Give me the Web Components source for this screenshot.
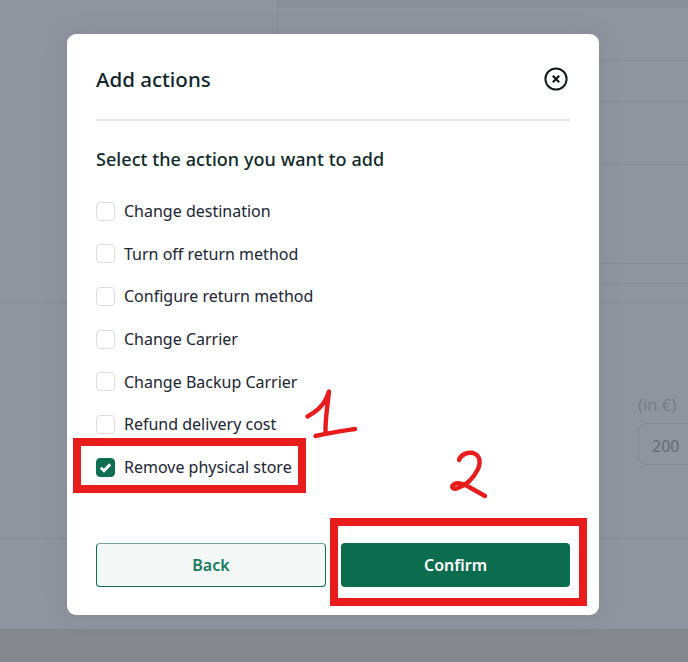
<!DOCTYPE html>
<html lang="en">
<head>
<meta charset="utf-8">
<title>Add actions</title>
<style>
  html, body { margin: 0; height: 100%; }
  body { width: 688px; height: 662px; overflow: hidden; position: relative; font-family: "Noto Sans", "Open Sans", sans-serif; }
</style>
</head>
<body>
<page-backdrop></page-backdrop>
<action-dialog heading="Add actions" prompt="Select the action you want to add">
  <action-check>Change destination</action-check>
  <action-check>Turn off return method</action-check>
  <action-check>Configure return method</action-check>
  <action-check>Change Carrier</action-check>
  <action-check>Change Backup Carrier</action-check>
  <action-check>Refund delivery cost</action-check>
  <action-check checked>Remove physical store</action-check>
  <action-button slot="footer" kind="outline">Back</action-button>
  <action-button slot="footer" kind="solid">Confirm</action-button>
</action-dialog>
<red-notes></red-notes>

<script>
// Dimmed page behind the dialog, only the row lines and the one input show through
class PageBackdrop extends HTMLElement {
  constructor() {
    super();
    this.attachShadow({ mode: "open" });
    this.shadowRoot.innerHTML = `
<style>
:host { display: flex; flex-direction: column; width: 688px; height: 662px; background: #90949f; --line: #878b96; }
.top { display: flex; height: 303px; border-bottom: 1px solid var(--line); box-sizing: border-box; }
.side { width: 277px; border-right: 1px solid var(--line); }
.rows { flex: 1; display: flex; flex-direction: column; }
.rows div { border-bottom: 1px solid var(--line); box-sizing: border-box; }
.rows .cap { height: 8px; background: #8b8f9a; border: 0; }
.middle { height: 235px; border-bottom: 1px solid var(--line); display: flex; justify-content: flex-end; }
.field { width: 50px; padding-top: 92px; display: flex; flex-direction: column; gap: 8px; font-size: 16.5px; }
.unit { color: #787d89; white-space: nowrap; line-height: 20px; }
.box { width: 64px; height: 42px; box-sizing: border-box; border: 1px solid #878b96; border-radius: 8px; color: #666b77; font-size: 16px; line-height: 44px; padding-left: 13px; }
.rest { flex: 1; }
.band { height: 33px; background: #85888f; }
</style>
<div class="top">
  <div class="side"></div>
  <div class="rows">
    <div class="cap"></div>
    <div style="height:53px"></div>
    <div style="height:41px"></div>
    <div style="height:63px"></div>
    <div style="height:99px"></div>
    <div style="height:20px"></div>
  </div>
</div>
<div class="middle">
  <div class="field">
    <div class="unit">(in €)</div>
    <div class="box">200</div>
  </div>
</div>
<div class="rest"></div>
<div class="band"></div>`;
  }
}

class ActionCheck extends HTMLElement {
  constructor() {
    super();
    this.attachShadow({ mode: "open" });
  }

  connectedCallback() {
    const checked = this.hasAttribute("checked");
    this.shadowRoot.innerHTML = `
<style>
:host { display: flex; align-items: center; gap: 9px; height: 20px; }
.box { width: 19px; height: 19px; box-sizing: border-box; border: 1px solid #dcdde3; border-radius: 4px; background: #fff; flex: none; display: flex; align-items: center; justify-content: center; }
.box.on { background: #0d6e50; border-color: #0d6e50; }
.label { font-size: 16px; line-height: 20px; color: #1b2533; white-space: nowrap; }
</style>
<span class="box ${checked ? "on" : ""}">${checked ? `<svg width="13" height="13" viewBox="0 0 13 13"><path d="M1.800 6.800 5 9.800 11.200 3.200" fill="none" stroke="#fff" stroke-width="2.800"/></svg>` : ""}</span>
<span class="label"><slot></slot></span>`;
  }
}

class ActionButton extends HTMLElement {
  constructor() {
    super();
    this.attachShadow({ mode: "open" });
  }

  connectedCallback() {
    this.shadowRoot.innerHTML = `
<style>
:host { display: flex; height: 44px; box-sizing: border-box; align-items: center; justify-content: center; border-radius: 4px; font-size: 16px; font-weight: 600; }
:host([kind="solid"]) { background: #0c6c4e; color: #fff; }
:host([kind="outline"]) { background: #f4f8f7; color: #1a7a5c; border: 1px solid #0d6e50; border-top-color: #6fa897; }
</style>
<slot></slot>`;
  }
}

class ActionDialog extends HTMLElement {
  constructor() {
    super();
    this.attachShadow({ mode: "open" });
  }

  connectedCallback() {
    this.shadowRoot.innerHTML = `
<style>
:host { position: absolute; left: 67px; top: 34px; width: 532px; height: 581px; box-sizing: border-box; padding: 0 29px; background: #fff; border-radius: 9px; box-shadow: 0 0 24px rgba(60,64,75,.12); display: flex; flex-direction: column; }
header { height: 80px; padding-top: 5px; flex: none; border-bottom: 2px solid #e8e8ee; display: flex; align-items: center; justify-content: space-between; }
h2 { margin: 0; font-size: 20.5px; font-weight: 500; color: #10242a; }
button { all: unset; display: flex; width: 24px; height: 24px; margin: -1px 2px 0 0; }
.prompt { margin: 26px 0 0; height: 24px; line-height: 24px; font-size: 18px; font-weight: 500; letter-spacing: .06px; color: #10292b; white-space: nowrap; }
.list { margin-top: 30px; display: flex; flex-direction: column; gap: 22.7px; }
footer { margin-top: auto; margin-bottom: 28px; display: grid; grid-template-columns: 230px 229px; gap: 15px; }
</style>
<header>
  <h2>${this.getAttribute("heading")}</h2>
  <button aria-label="Close">
    <svg width="24" height="24" viewBox="0 0 24 24"><circle cx="12" cy="12" r="10.6" fill="none" stroke="#15191c" stroke-width="2"/><path d="M8.8 8.8 15.2 15.2M15.2 8.8 8.8 15.2" stroke="#15191c" stroke-width="2.2"/></svg>
  </button>
</header>
<p class="prompt">${this.getAttribute("prompt")}</p>
<div class="list"><slot></slot></div>
<footer><slot name="footer"></slot></footer>`;
  }
}

// Red marker annotations drawn over the screenshot
class RedNotes extends HTMLElement {
  constructor() {
    super();
    this.attachShadow({ mode: "open" });
    this.shadowRoot.innerHTML = `
<style>
:host { position: absolute; inset: 0; pointer-events: none; display: block; }
.frame { position: absolute; box-sizing: border-box; border: 8px solid #e81c1c; }
svg { position: absolute; left: 0; top: 0; }
</style>
<div class="frame" style="left:73px;top:438px;width:233px;height:55px"></div>
<div class="frame" style="left:330px;top:518px;width:257px;height:88px"></div>
<svg width="688" height="662" viewBox="0 0 688 662" fill="none" stroke="#e81c1c" stroke-width="4.400" stroke-linecap="round" stroke-linejoin="round">
  <path d="M307.500 416.500C314 413 322 407 326 399L329 391.500C327.500 405 325 421 325.500 433"/>
  <path d="M315.500 436C328 433 342 431 355 429"/>
  <path d="M459 460C461 454 468 452 473 453C480 455 481 462 478 469C474 477 467 485 458 488C453 490 451 487 453 485C456 482 463 483 469 487L485 496"/>
</svg>`;
  }
}

customElements.define("page-backdrop", PageBackdrop);
customElements.define("action-check", ActionCheck);
customElements.define("action-button", ActionButton);
customElements.define("action-dialog", ActionDialog);
customElements.define("red-notes", RedNotes);
</script>
</body>
</html>
